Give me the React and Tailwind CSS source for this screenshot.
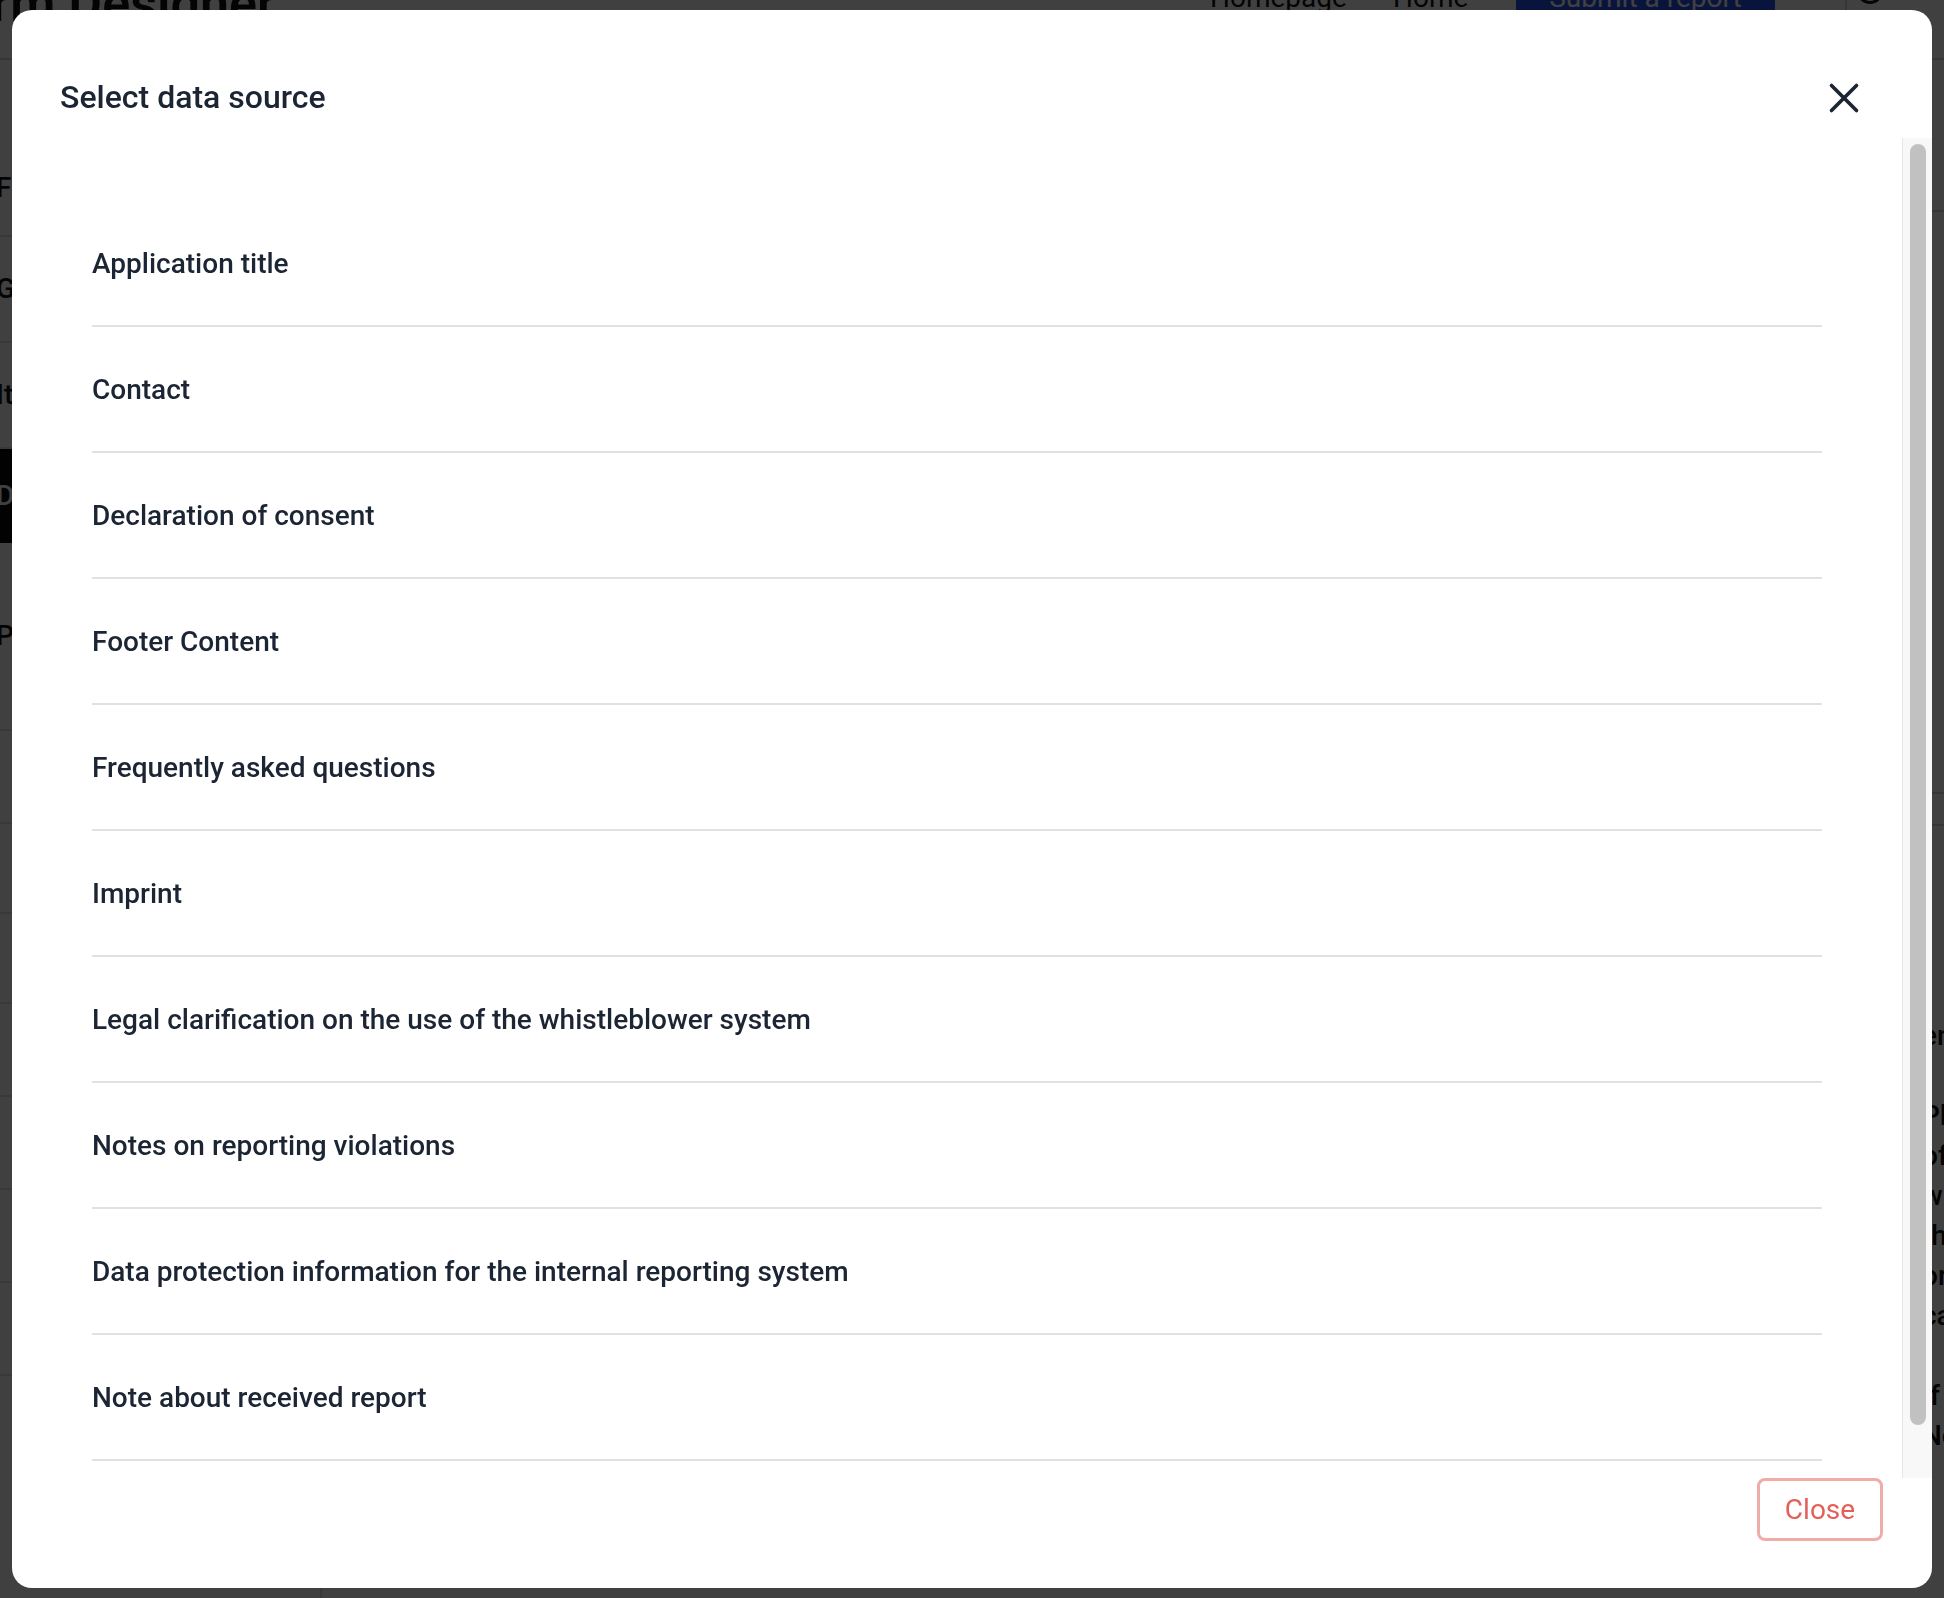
import { X } from "lucide-react";

const QUELLEN = [
  "Application title",
  "Contact",
  "Declaration of consent",
  "Footer Content",
  "Frequently asked questions",
  "Imprint",
  "Legal clarification on the use of the whistleblower system",
  "Notes on reporting violations",
  "Data protection information for the internal reporting system",
  "Note about received report",
];

const SEITENLEISTE = [
  { text: "Form", hoehe: 96 },
  { text: "General", hoehe: 106 },
  { text: "Items", hoehe: 106 },
  { text: "Declaration", hoehe: 94, aktiv: true },
  { text: "Pages", hoehe: 188 },
  { text: "", hoehe: 93 },
  { text: "", hoehe: 90 },
  { text: "", hoehe: 90 },
  { text: "", hoehe: 93 },
  { text: "", hoehe: 93 },
  { text: "", hoehe: 93 },
  { text: "", hoehe: 93 },
];

const ABSATZ = [
  "entered",
  "",
  "Please",
  "of the",
  "will be",
  "the data",
  "or any",
  "case.",
  "",
  "If you",
  "Note",
];

// ===== HINTERGRUND (abgedunkelte Seite) =====
function Hintergrund() {
  return (
    <div className="flex flex-col h-[1598px] w-[1944px] overflow-hidden bg-white text-[#111]">
      <div className="flex items-start h-[86px] -mt-[26px] border-b-2 border-[#d8d8d8] shrink-0">
        <div className="w-[1210px] shrink-0">
          <div className="-ml-[66px] text-[52px] leading-[60px] font-semibold whitespace-nowrap">Form Designer</div>
        </div>
        <span className="w-[183px] shrink-0 pt-[10px] text-[28px] leading-[28px]">Homepage</span>
        <span className="w-[123px] shrink-0 pt-[10px] text-[28px] leading-[28px]">Home</span>
        <div className="w-[259px] h-[58px] shrink-0 bg-[#2550f0] text-white text-[28px] leading-[28px] pt-[10px] text-center">Submit a report</div>
        <div className="w-[72px] h-[60px] shrink-0 border-r-2 border-[#d8d8d8]"></div>
        <div className="w-[100px] shrink-0 pt-[4px] pl-[10px]">
          <div className="w-[26px] h-[26px] rounded-full border-[3px] border-[#111]"></div>
        </div>
        <span className="shrink-0 pt-[10px] text-[28px] leading-[28px] text-[#777]">Search</span>
      </div>

      <div className="flex flex-1">
        <aside className="w-[320px] shrink-0 flex flex-col pt-[81px]">
          {SEITENLEISTE.map((s, i) => (
            <div
              key={i}
              style={{ height: s.hoehe }}
              className={
                s.aktiv
                  ? "flex items-center bg-[#0b0b0f] text-white text-[28px] font-medium shrink-0"
                  : "flex items-center border-b-2 border-[#e2e2e2] text-[28px] font-medium shrink-0"
              }
            >
              <span className="-ml-[4px]">{s.text}</span>
            </div>
          ))}
        </aside>
        <main className="w-[1610px] shrink-0 border-l-2 border-[#e2e2e2]"></main>
        <section className="w-[300px] shrink-0 flex flex-col pt-[150px]">
          <div className="h-[2px] bg-[#d8d8d8] mb-[580px]"></div>
          <div className="h-[2px] bg-[#d8d8d8] mb-[30px]"></div>
          <div className="h-[2px] bg-[#d8d8d8] mb-[190px]"></div>
          {ABSATZ.map((z, i) => (
            <div key={i} className="h-[40px] text-[28px] leading-[40px] font-medium -ml-[8px]">{z}</div>
          ))}
        </section>
      </div>
    </div>
  );
}

export default function App() {
  return (
    <div className="relative w-full h-[1598px] overflow-hidden font-['Roboto','Liberation_Sans',sans-serif]">
      <Hintergrund />

      {/* Overlay */}
      <div className="fixed inset-0 bg-black/75"></div>

      {/* Dialog */}
      <div className="fixed left-[12px] top-[10px] w-[1920px] h-[1578px] bg-white rounded-[20px] overflow-hidden flex flex-col">
        <div className="h-[128px] shrink-0 flex justify-between">
          <h2 className="pl-[48px] pt-[63px] text-[32px] leading-[48px] font-medium text-[#1c2533]">Select data source</h2>
          <button className="mr-[63px] mt-[63px] w-[50px] h-[50px] flex items-center justify-center text-[#1c2533]">
            <X size={50} strokeWidth={1.75} />
          </button>
        </div>

        <div className="h-[1340px] shrink-0 flex">
          <div className="flex-1 overflow-hidden px-[80px] pt-[63px]">
            {QUELLEN.map((q) => (
              <div key={q} className="h-[126px] flex items-center pt-[2px] border-b-2 border-[#e1e1e1] text-[28px] font-medium text-[#1c2533]">
                {q}
              </div>
            ))}
          </div>
          <div className="w-[30px] shrink-0 border-l border-[#e6e6e6] bg-[#f8f8f8] pt-[6px] pl-[7px]">
            <div className="w-[16px] h-[1281px] rounded-full bg-[#c1c1c1]"></div>
          </div>
        </div>

        <div className="flex-1 flex justify-end items-start pr-[49px]">
          <button className="w-[126px] h-[63px] border-[3px] border-[#f0aca6] rounded-[8px] text-[#e3605a] text-[28px] leading-none">
            Close
          </button>
        </div>
      </div>
    </div>
  );
}
